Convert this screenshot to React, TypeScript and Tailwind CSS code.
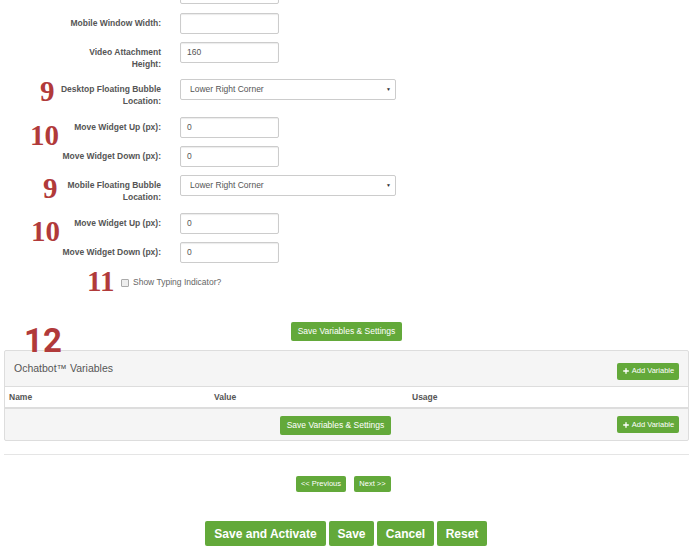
import { Plus } from 'lucide-react';

const labelCls = "w-[102px] ml-[59px] shrink-0 text-right text-[8.5px] leading-[12px] font-bold text-[#555]";
const inputCls = "w-[99px] h-[21px] border border-[#ccc] rounded-[2px] bg-white px-[6px] text-[8.5px] text-[#555] flex items-center shadow-[inset_0_1px_1px_rgba(0,0,0,0.08)]";
const greenCls = "bg-[#63a93a] text-white rounded-[2px] flex items-center justify-center";

function Num({ n, className }: { n: string; className: string }) {
  return <span className={`absolute font-['Liberation_Serif',serif] font-bold text-[#b13a3a] leading-none ${className}`}>{n}</span>;
}

function InputRow({ label, value, className }: { label: string; value?: string; className?: string }) {
  return (
    <div className={`flex items-start gap-[19px] h-[21px] ${className || ''}`}>
      <div className={`${labelCls} pt-[4px]`}>{label}</div>
      <div className={inputCls}>{value}</div>
    </div>
  );
}

function SelectRow({ label, className }: { label: string; className?: string }) {
  return (
    <div className={`flex items-start gap-[19px] h-[21px] ${className || ''}`}>
      <div className={`${labelCls} pt-[4px]`}>{label}</div>
      <div className="w-[216px] h-[21px] border border-[#ccc] rounded-[2px] bg-white pl-[9px] pr-[4px] text-[8.5px] text-[#555] flex items-center justify-between">
        <span>Lower Right Corner</span>
        <span className="text-[5px] text-[#333]">▼</span>
      </div>
    </div>
  );
}

export default function App() {
  return (
    <div className="relative w-[700px] h-[554px] overflow-hidden bg-white font-['Liberation_Sans',sans-serif]">
      <div className="flex flex-col -mt-[17px]">
        <InputRow label="" />
        <InputRow label="Mobile Window Width:" className="mt-[9px]" />
        <InputRow label="Video Attachment Height:" value="160" className="mt-[8px]" />
        <SelectRow label="Desktop Floating Bubble Location:" className="mt-[16px]" />
        <InputRow label="Move Widget Up (px):" value="0" className="mt-[17px]" />
        <InputRow label="Move Widget Down (px):" value="0" className="mt-[8px]" />
        <SelectRow label="Mobile Floating Bubble Location:" className="mt-[8px]" />
        <InputRow label="Move Widget Up (px):" value="0" className="mt-[17px]" />
        <InputRow label="Move Widget Down (px):" value="0" className="mt-[8px]" />
        <div className="flex items-center gap-[4px] ml-[121px] mt-[13px] h-[13px]">
          <span className="w-[8px] h-[8px] border border-[#aaa] rounded-[1px] bg-[#eee]" />
          <span className="text-[8.5px] text-[#666]">Show Typing Indicator?</span>
        </div>
      </div>

      <div className="flex justify-center mt-[33px] ml-[-7px]">
        <div className={`${greenCls} w-[111px] h-[19px] text-[8.5px]`}>Save Variables &amp; Settings</div>
      </div>

      <div className="mx-[4px] mt-[9px] w-[685px] border border-[#ddd] rounded-[2px] bg-[#f5f5f5]">
        <div className="h-[36px] flex items-center justify-between pl-[9px] pr-[9px] border-b border-[#ddd]">
          <span className="text-[10.5px] text-[#555]">Ochatbot™ Variables</span>
          <div className={`${greenCls} w-[62px] h-[17px] gap-[2px] text-[7.5px] mt-[5px]`}>
            <Plus size={8} strokeWidth={4} />Add Variable
          </div>
        </div>
        <div className="h-[22px] bg-white grid grid-cols-[205px_198px_1fr] items-center pl-[4px] text-[8.5px] font-bold text-[#555] border-b-2 border-[#ddd]">
          <span>Name</span><span>Value</span><span>Usage</span>
        </div>
        <div className="h-[31px] flex items-start pt-[7px] justify-between pr-[9px]">
          <div className={`${greenCls} w-[111px] h-[19px] text-[8.5px] ml-[275px]`}>Save Variables &amp; Settings</div>
          <div className={`${greenCls} w-[62px] h-[17px] gap-[2px] text-[7.5px]`}>
            <Plus size={8} strokeWidth={4} />Add Variable
          </div>
        </div>
      </div>

      <div className="mx-[4px] mt-[13px] w-[685px] h-px bg-[#e5e5e5]" />

      <div className="flex gap-[8px] ml-[296px] mt-[21px]">
        <div className={`${greenCls} w-[50px] h-[16px] text-[7.5px]`}>&lt;&lt; Previous</div>
        <div className={`${greenCls} w-[37px] h-[16px] text-[7.5px]`}>Next &gt;&gt;</div>
      </div>

      <div className="flex gap-[3px] ml-[205px] mt-[29px] text-[12px] font-bold">
        <div className={`${greenCls} w-[121px] h-[25px]`}>Save and Activate</div>
        <div className={`${greenCls} w-[45px] h-[25px]`}>Save</div>
        <div className={`${greenCls} w-[57px] h-[25px]`}>Cancel</div>
        <div className={`${greenCls} w-[50px] h-[25px]`}>Reset</div>
      </div>

      <Num n="9" className="left-[40px] top-[77px] text-[29px]" />
      <Num n="10" className="left-[30px] top-[121px] text-[29px]" />
      <Num n="9" className="left-[43px] top-[174px] text-[29px]" />
      <Num n="10" className="left-[31px] top-[217px] text-[29px]" />
      <Num n="11" className="left-[87px] top-[267px] text-[29px]" />
      <span className="absolute left-[24px] top-[324px] font-['Roboto',sans-serif] font-bold text-[33px] leading-none text-[#b13a3a]">12</span>
    </div>
  );
}
